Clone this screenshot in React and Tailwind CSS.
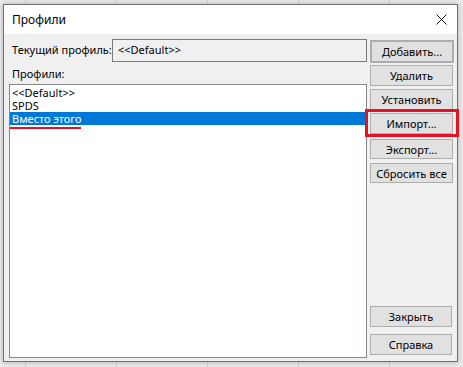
import React from "react";

const font = { fontFamily: '"Noto Sans", "Liberation Sans", Arial, sans-serif' };

function Btn({ children, className = "" }) {
  return (
    <div
      className={
        "flex items-center justify-center bg-[#e1e1e1] border border-[#adadad] text-[11px] leading-none text-black " +
        className
      }
    >
      {children}
    </div>
  );
}

export default function App() {
  return (
    <div
      style={font}
      className="w-[463px] h-[367px] overflow-hidden bg-[#ebebeb] bg-[image:repeating-linear-gradient(90deg,transparent_0px,transparent_25px,#d2d2d2_25px,#d2d2d2_26px,transparent_26px,transparent_91px)] pt-[4px] pl-[3px]"
    >
      <div className="w-[455px] h-[358px] border border-[#707070] bg-[#f0f0f0] flex flex-col shadow-[0_0_6px_rgba(0,0,0,0.25)]">
        {/* title bar */}
        <div className="h-[29px] bg-white flex items-center pl-[8px] pr-[10px]">
          <span className="text-[12px] text-black">Профили</span>
          <svg className="ml-auto" width="11" height="11" viewBox="0 0 11 11">
            <path d="M0.5 0.5 L10.5 10.5 M10.5 0.5 L0.5 10.5" stroke="#111" strokeWidth="1" />
          </svg>
        </div>
        {/* body */}
        <div className="flex-1 flex pl-[5px] pt-[5px] pb-[3px]">
          {/* left column */}
          <div className="w-[358px] flex flex-col">
            <div className="flex items-center h-[23px]">
              <span className="pl-[3px] text-[11px] text-black">Текущий профиль:</span>
              <div className="ml-auto w-[255px] h-[23px] border border-[#7a7a7a] bg-[#f0f0f0] flex items-center pl-[5px] text-[11px] text-black">
                &lt;&lt;Default&gt;&gt;
              </div>
            </div>
            <div className="h-[22px] flex items-center pt-[2px] pl-[3px] text-[11px] text-black">Профили:</div>
            <div className="h-[274px] border border-[#828790] bg-white pt-[1px] text-[11px] text-black">
              <div className="h-[13px] leading-[13px] pl-[2px]">&lt;&lt;Default&gt;&gt;</div>
              <div className="h-[13px] leading-[13px] pl-[2px]">SPDS</div>
              <div className="h-[13px] leading-[13px] pl-[2px] bg-[#0078d7] text-white">Вместо этого</div>
              <div className="mt-[2px] w-[71px] h-[2px] bg-[#e81123]" />
            </div>
          </div>
          {/* right column */}
          <div className="ml-[3px] flex flex-col">
            <Btn className="mt-[1px] w-[84px] h-[23px] border-2 border-[#0078d7]">Добавить...</Btn>
            <Btn className="mt-[2px] w-[83px] h-[21px]">Удалить</Btn>
            <Btn className="mt-[3px] w-[83px] h-[21px]">Установить</Btn>
            <div className="relative mt-[3px]">
              <Btn className="w-[83px] h-[21px]">Импорт...</Btn>
              <div className="absolute left-[-5px] right-[-5px] top-[-4px] bottom-[-3px] border-[3px] border-[#e81123]" />
            </div>
            <Btn className="mt-[5px] w-[83px] h-[20px]">Экспорт...</Btn>
            <Btn className="mt-[4px] w-[83px] h-[20px]">Сбросить все</Btn>
            <Btn className="mt-auto w-[82px] h-[21px]">Закрыть</Btn>
            <Btn className="mt-[7px] mb-[3px] w-[82px] h-[21px]">Справка</Btn>
          </div>
        </div>
      </div>
    </div>
  );
}
